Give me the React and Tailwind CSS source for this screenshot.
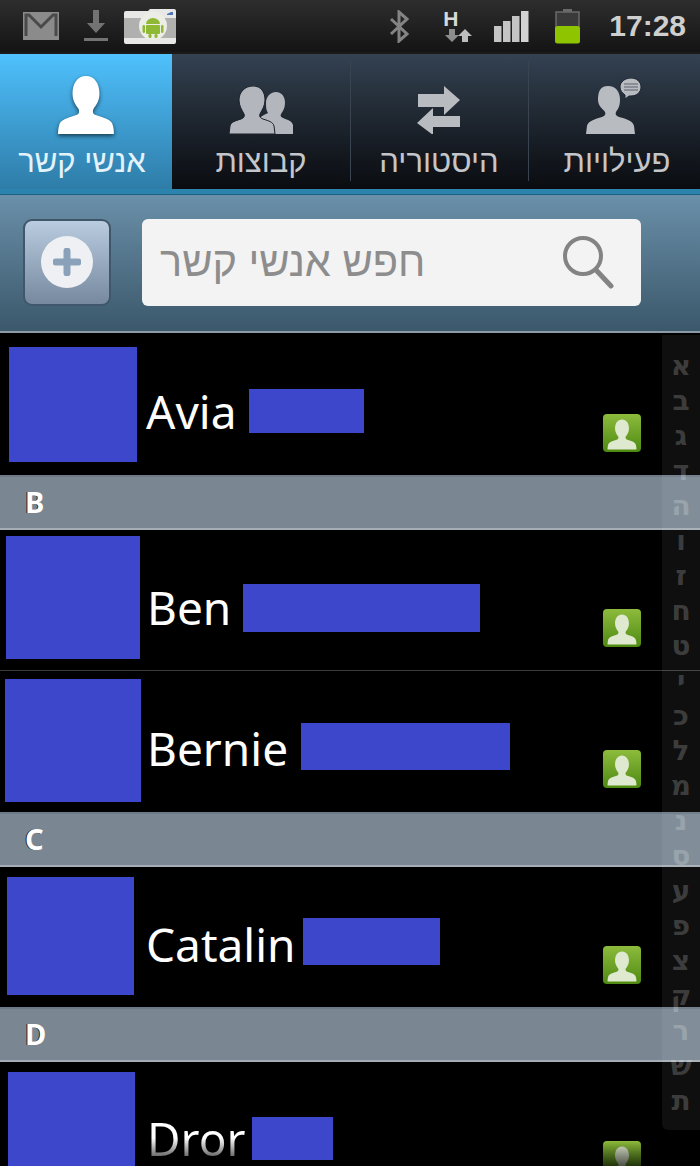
const PERSON = 'M28 0c8 0 13 7 13 17 0 7-3 11-6 15-1 3 0 5 3 6 8 3 15 4 16 10 1 3 1 8 1 8H1s0-5 1-8c1-6 8-7 16-10 3-1 4-3 3-6-3-4-6-8-6-15C15 7 20 0 28 0z'

const INDEX_LETTERS = ['א', 'ב', 'ג', 'ד', 'ה', 'ו', 'ז', 'ח', 'ט', 'י', 'כ', 'ל', 'מ', 'נ', 'ס', 'ע', 'פ', 'צ', 'ק', 'ר', 'ש', 'ת']

// ── Status bar icons ────────────────────────────────────────────────
function MailIcon() {
  return (
    <svg width="36" height="28" viewBox="0 0 36 28" className="ml-[23px]">
      <rect x="0" y="0" width="36" height="28" fill="#8b8b8b" />
      <path d="M3 24V3h3l12 12L30 3h3v21" fill="none" stroke="#4a4a4a" strokeWidth="3" />
    </svg>
  )
}

function DownloadIcon() {
  return (
    <svg width="24" height="32" viewBox="0 0 24 32" className="ml-[25px]">
      <path d="M9 0h6v13h6l-9 10-9-10h6z" fill="#737373" />
      <rect x="0" y="28" width="24" height="3" fill="#737373" />
    </svg>
  )
}

function CameraIcon() {
  return (
    <svg width="54" height="37" viewBox="0 0 54 37" className="ml-[15px]">
      <path d="M3 3h22l2-2h24a2 2 0 0 1 2 2v31a2 2 0 0 1-2 2H3a2 2 0 0 1-2-2V5a2 2 0 0 1 2-2z" fill="#e8e8e6" />
      <rect x="1" y="10" width="52" height="20" fill="#b0b0ae" />
      <path d="M44 6l4-2h2v3h-6z" fill="#4a76b8" />
      <circle cx="30" cy="18" r="14" fill="#eceee6" />
      <path d="M23 16a7 6 0 0 1 14 0z" fill="#8fb935" />
      <rect x="23" y="17" width="14" height="9" rx="1" fill="#8fb935" />
      <rect x="19.500" y="17" width="2.500" height="8" rx="1.200" fill="#8fb935" />
      <rect x="38" y="17" width="2.500" height="8" rx="1.200" fill="#8fb935" />
      <rect x="25.500" y="26" width="3" height="4" rx="1.200" fill="#8fb935" />
      <rect x="31.500" y="26" width="3" height="4" rx="1.200" fill="#8fb935" />
    </svg>
  )
}

function BluetoothIcon() {
  return (
    <svg width="21" height="33" viewBox="0 0 21 33">
      <path d="M2 9l16 15-8 7V2l8 7L2 24" fill="none" stroke="#848484" strokeWidth="3" />
    </svg>
  )
}

function NetworkIcon() {
  return (
    <div className="ml-[33px] flex w-[30px] flex-col items-start">
      <span className="font-['Liberation_Sans',sans-serif] text-[21px] leading-[17px] font-bold text-[#d8d8d8]">H</span>
      <svg width="30" height="15" viewBox="0 0 30 15" className="mt-[1px]">
        <path d="M9 14L2 7h4V1h6v6h4z" fill="#8d8d8d" />
        <path d="M22 1l7 7h-4v6h-6V8h-4z" fill="#bdbdbd" />
      </svg>
    </div>
  )
}

function SignalIcon() {
  return (
    <svg width="35" height="31" viewBox="0 0 35 31" className="ml-[21px]">
      <rect x="0" y="15" width="7.500" height="16" fill="#c4c4c4" />
      <rect x="9" y="10" width="7.500" height="21" fill="#c4c4c4" />
      <rect x="18" y="5" width="7.500" height="26" fill="#c4c4c4" />
      <rect x="27" y="0" width="7.500" height="31" fill="#d2d2d2" />
    </svg>
  )
}

function BatteryIcon() {
  return (
    <svg width="25" height="35" viewBox="0 0 25 35" className="ml-[26px]">
      <rect x="8" y="0" width="9" height="3" fill="#6a6a6a" />
      <rect x="1" y="3" width="23" height="16" fill="#3a3a3a" stroke="#6a6a6a" strokeWidth="1.500" />
      <rect x="0" y="17" width="25" height="17.500" rx="2.500" fill="#8ec400" />
    </svg>
  )
}

function StatusBar() {
  return (
    <div className="flex h-[52px] items-center bg-linear-to-b from-[#2e2e2e] to-[#141414]">
      <MailIcon />
      <DownloadIcon />
      <CameraIcon />
      <div className="ml-auto flex items-center">
        <BluetoothIcon />
        <NetworkIcon />
        <SignalIcon />
        <BatteryIcon />
        <span className="mr-[14px] ml-[29px] font-['Liberation_Sans',sans-serif] text-[30px] leading-none font-bold text-[#cfcfcf]">17:28</span>
      </div>
    </div>
  )
}

// ── Tab icons ───────────────────────────────────────────────────────
function GroupIcon() {
  return (
    <svg width="64" height="48" viewBox="0 0 64 48">
      <path d="M47 6c6 0 9 5 9 11 0 5-2 8-4 11-1 2 0 3 2 4 5 2 9 3 10 7v9H30V34c0-3 5-5 9-7-2-3-2-6-2-10 0-6 4-11 10-11z" fill="#b3b6bc" />
      <path d="M24 0c8 0 12 6 12 14 0 6-3 10-5 14-1 2 0 4 3 5 6 2 10 3 11 7l1 8H0l1-8c1-4 5-5 11-7 3-1 4-3 3-5-2-4-5-8-5-14C10 6 16 0 24 0z" fill="#b3b6bc" stroke="#1b2028" strokeWidth="1" />
    </svg>
  )
}

function HistoryIcon() {
  return (
    <svg width="44" height="48" viewBox="0 0 44 48">
      <path d="M1 8h26V0l16 14-16 15v-8H1z" fill="#b8bbc0" />
      <path d="M43 30H16v-8L0 37l16 12v-8h27z" fill="#b8bbc0" />
    </svg>
  )
}

function ActivityIcon() {
  return (
    <svg width="56" height="56" viewBox="0 0 56 56">
      <path d="M22 8c8 0 12 6 12 14 0 6-2 9-4 12-1 2 0 4 3 5 8 2 14 4 15 9l1 8H0l1-8c1-5 8-7 15-9 3-1 4-3 3-5-2-3-7-6-7-12C12 14 14 8 22 8z" fill="#b8bbc0" />
      <path d="M45 0c6 0 10 4 10 9s-4 9-10 9h-2l-4 3 0-4c-3-2-5-5-5-8 0-5 5-9 11-9z" fill="#b8bbc0" stroke="#1b2430" strokeWidth="1" />
      <path d="M38 6h14M38 9h14M38 12h14" stroke="#7b7f86" strokeWidth="1.500" />
    </svg>
  )
}

function Tab({ label, icon, active, width, divider, labelClass }) {
  return (
    <div
      className={`relative flex flex-col items-center ${width} ${active
        ? 'bg-linear-to-b from-[#4fc1fd] to-[#2e7ca8] text-[#e4f3fb]'
        : 'text-[#c4c6c9]'}`}
    >
      {divider && <div className="absolute top-[7px] left-0 h-[120px] w-px bg-[#3a4450]" />}
      <div className="flex h-[80px] items-end">{icon}</div>
      <span dir="rtl" className={`mt-[10px] font-['Liberation_Sans',sans-serif] text-[31px] leading-[36px] ${labelClass}`}>{label}</span>
    </div>
  )
}

function TabBar() {
  return (
    <div className="flex h-[137px] border-t-2 border-[#1a1a1a] bg-linear-to-b from-[#344252] to-[#0a0c10]">
      <Tab
        active
        width="w-[172px]"
        label="אנשי קשר"
        labelClass="mr-[8px]"
        icon={<svg width="58" height="58" viewBox="0 0 56 56" className="drop-shadow-[0_2px_2px_rgba(0,0,0,0.6)]"><path d={PERSON} fill="#fff" /></svg>}
      />
      <Tab width="w-[178px]" label="קבוצות" icon={<GroupIcon />} />
      <Tab width="w-[178px]" label="היסטוריה" divider icon={<HistoryIcon />} />
      <Tab width="w-[172px]" label="פעילויות" divider labelClass="ml-[6px]" icon={<ActivityIcon />} />
    </div>
  )
}

// ── Search row ──────────────────────────────────────────────────────
function SearchRow() {
  return (
    <div className="border-t-[5px] border-[#2a84ad]">
      <div className="flex h-[139px] items-center border-t border-b-2 border-t-[#1c5f7f] border-b-[#8b9aa6] bg-linear-to-b from-[#6b90aa] to-[#3b586b] pb-[2px] pl-[23px]">
        <div className="flex h-[87px] w-[88px] items-center justify-center rounded-[9px] border-2 border-[#40566a] bg-linear-to-b from-[#b9cce0] to-[#76899e]">
          <div className="flex h-[52px] w-[52px] items-center justify-center rounded-full bg-[#eef0f3]">
            <svg width="28" height="28" viewBox="0 0 28 28">
              <path d="M14 3v22M3 14h22" stroke="#8aa1b9" strokeWidth="7" strokeLinecap="round" />
            </svg>
          </div>
        </div>
        <div className="ml-[31px] flex h-[87px] w-[499px] items-center justify-between rounded-[6px] bg-[#f3f3f3] pr-[27px] pl-[18px]">
          <span dir="rtl" className="font-['Liberation_Sans',sans-serif] text-[41.500px] leading-none text-[#8d8d8d]">חפש אנשי קשר</span>
          <svg width="52" height="54" viewBox="0 0 52 54">
            <circle cx="21" cy="21" r="18" fill="none" stroke="#838383" strokeWidth="4" />
            <path d="M34 35l15 16" stroke="#838383" strokeWidth="5" strokeLinecap="round" />
          </svg>
        </div>
      </div>
    </div>
  )
}

// ── Contact list ────────────────────────────────────────────────────
function ContactBadge({ fade }) {
  return (
    <div className="relative flex h-[38px] w-[38px] items-end justify-center overflow-hidden rounded-[4px] bg-linear-to-b from-[#8dbb3c] to-[#4d8a0f]">
      <svg width="30" height="33" viewBox="0 0 56 60">
        <path d={PERSON} fill="#dfe9cf" />
      </svg>
      {fade && <div className="absolute inset-0 bg-linear-to-b from-transparent to-black" />}
    </div>
  )
}

function SectionHeader({ letter }) {
  return (
    <div className="flex h-[55px] items-center border-t-2 border-b-2 border-t-[#6d7986] border-b-[#a4adb5] bg-[#7a8793] pb-[3px] pl-[25px]">
      <span className="font-['Noto_Sans',sans-serif] text-[29px] leading-none font-bold text-white [text-shadow:-1px_0_0_#222]">{letter}</span>
    </div>
  )
}

function ContactRow({ name, height, photo, nameClass, redact, badgeTop, border, fade }) {
  return (
    <div className={`flex items-start overflow-hidden ${height} ${border ? 'border-b border-[#3c3c3c]' : ''}`}>
      <div className={`shrink-0 bg-[#3d47cc] ${photo}`} />
      <span
        className={`shrink-0 font-['Noto_Sans',sans-serif] text-[46px] leading-none ${nameClass} ${fade
          ? 'bg-linear-to-b from-white via-white to-[#4a4a4a] bg-clip-text text-transparent'
          : 'text-white'}`}
      >
        {name}
      </span>
      <div className={`shrink-0 bg-[#3d47cc] ${redact}`} />
      <div className={`mr-[59px] ml-auto shrink-0 ${badgeTop}`}>
        <ContactBadge fade={fade} />
      </div>
    </div>
  )
}

function IndexBar() {
  return (
    <div className="absolute top-[335px] right-0 flex h-[795px] w-[38px] flex-col items-center rounded-bl-[6px] bg-white/6 pt-[13px]">
      {INDEX_LETTERS.map((l) => (
        <span key={l} className="flex h-[35px] items-center font-['DejaVu_Sans',sans-serif] text-[28px] leading-none font-bold text-white/20">{l}</span>
      ))}
    </div>
  )
}

export default function App() {
  return (
    <div className="relative h-[1166px] w-[700px] overflow-hidden bg-black">
      <StatusBar />
      <TabBar />
      <SearchRow />

      <ContactRow
        name="Avia"
        height="h-[142px]"
        photo="mt-[14px] ml-[9px] h-[115px] w-[128px]"
        nameClass="mt-[55px] ml-[9px]"
        redact="mt-[56px] ml-[13px] h-[44px] w-[115px]"
        badgeTop="mt-[81px]"
      />
      <SectionHeader letter="B" />
      <ContactRow
        name="Ben"
        height="h-[141px]"
        border
        photo="mt-[6px] ml-[6px] h-[123px] w-[134px]"
        nameClass="mt-[54px] ml-[7px]"
        redact="mt-[54px] ml-[12px] h-[48px] w-[237px]"
        badgeTop="mt-[79px]"
      />
      <ContactRow
        name="Bernie"
        height="h-[141px]"
        photo="mt-[8px] ml-[5px] h-[123px] w-[136px]"
        nameClass="mt-[54px] ml-[6px]"
        redact="mt-[52px] ml-[13px] h-[47px] w-[209px]"
        badgeTop="mt-[79px]"
      />
      <SectionHeader letter="C" />
      <ContactRow
        name="Catalin"
        height="h-[140px]"
        photo="mt-[10px] ml-[7px] h-[118px] w-[127px]"
        nameClass="mt-[54px] ml-[12px]"
        redact="mt-[51px] ml-[8px] h-[47px] w-[137px]"
        badgeTop="mt-[79px]"
      />
      <SectionHeader letter="D" />
      <ContactRow
        name="Dror"
        fade
        height="h-[104px]"
        photo="mt-[10px] ml-[8px] h-[94px] w-[127px]"
        nameClass="mt-[53px] ml-[12px]"
        redact="mt-[55px] ml-[6px] h-[43px] w-[81px]"
        badgeTop="mt-[79px]"
      />

      <IndexBar />
    </div>
  )
}
